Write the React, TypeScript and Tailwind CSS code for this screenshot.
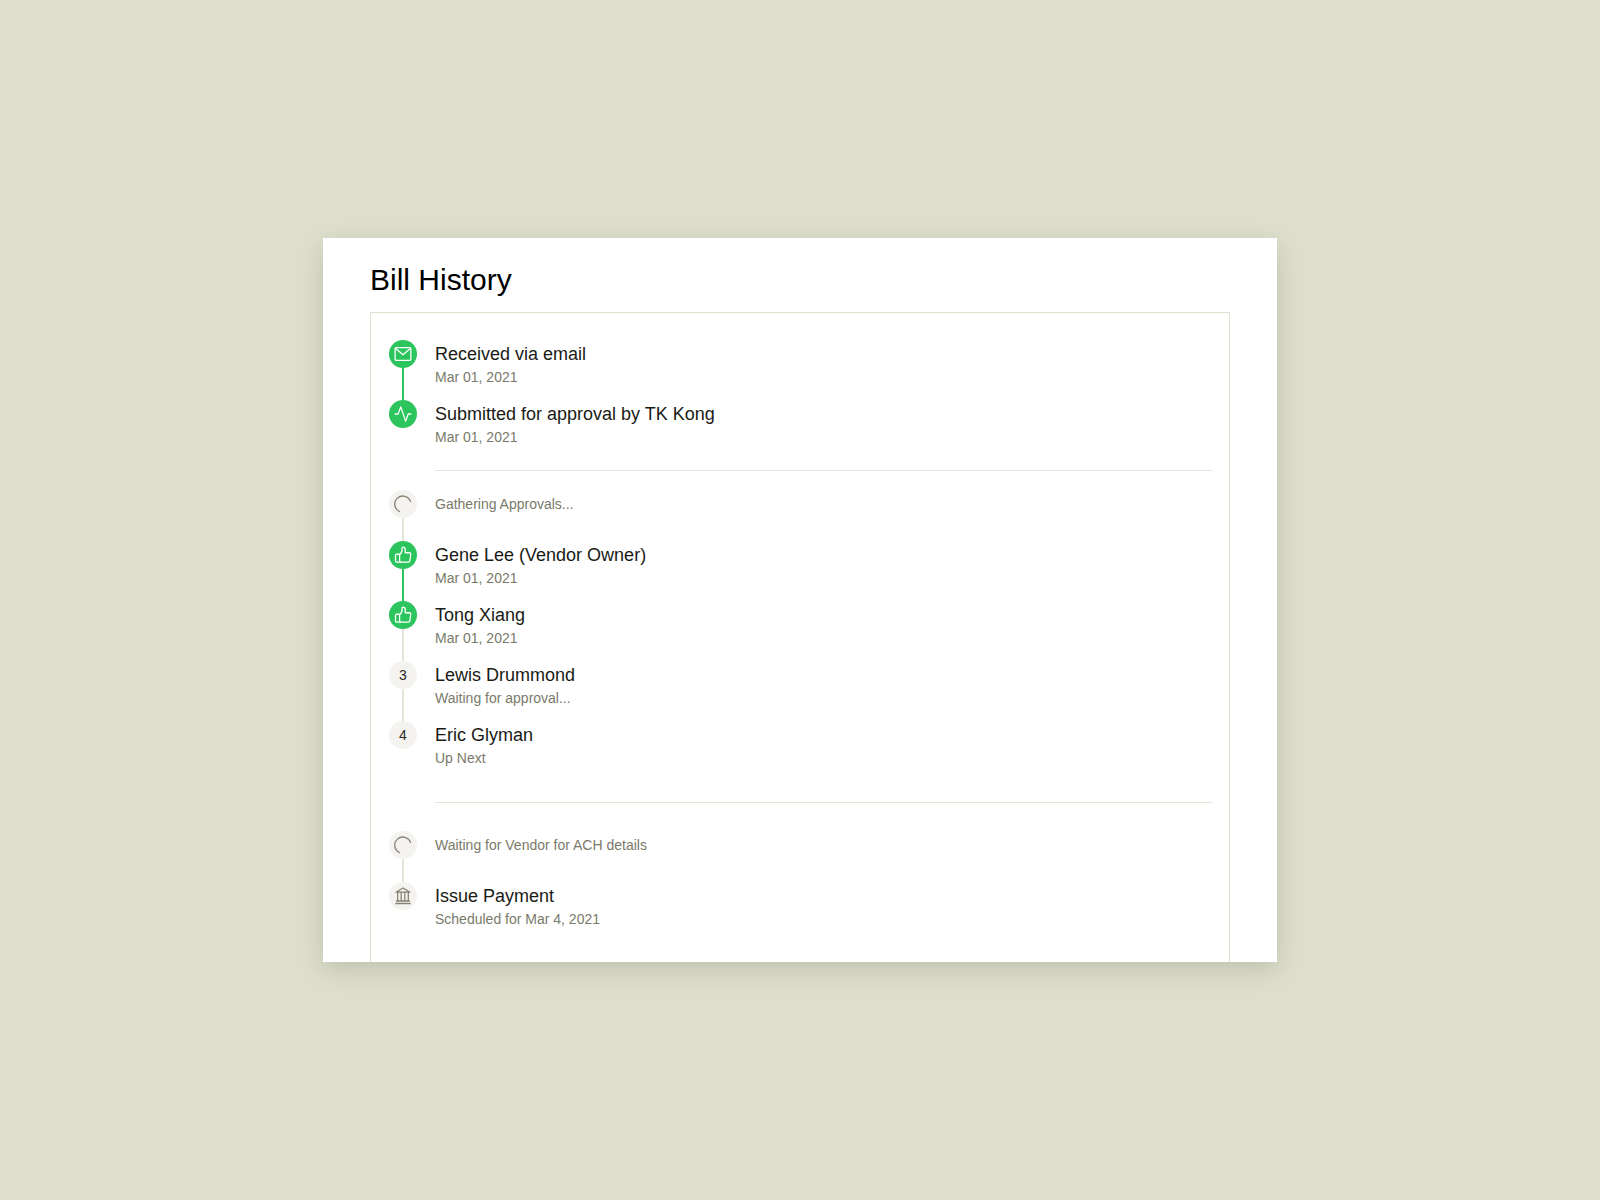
import type { ReactNode } from "react";

type Tone = "done" | "idle";

type Step = {
  icon: ReactNode;
  tone: Tone;
  title?: string;
  note: string;
};

const stroke = {
  fill: "none",
  stroke: "currentColor",
  strokeLinecap: "round",
  strokeLinejoin: "round",
} as const;

function MailIcon() {
  return (
    <svg viewBox="0 0 24 24" className="size-[18px]" strokeWidth="1.7" aria-hidden="true" {...stroke}>
      <rect x="1.5" y="3.5" width="21" height="17" rx="1.6" />
      <path d="M2.2 4.800 12 13l9.800-8.200" />
    </svg>
  );
}

function PulseIcon() {
  return (
    <svg viewBox="0 0 24 24" className="size-[18px]" strokeWidth="1.7" aria-hidden="true" {...stroke}>
      <path d="M22.5 12H19l-3.500 9.500L9 2.500 5.500 12h-4" />
    </svg>
  );
}

function ThumbIcon() {
  return (
    <svg viewBox="0 0 24 24" className="size-[18px]" strokeWidth="1.7" aria-hidden="true" {...stroke}>
      <path d="M7.500 11.500c2.200-1.200 3.200-3.500 3.200-6.500V3c0-.8.500-1.500 1.300-1.500 1.700 0 3 1.400 3 3.100V9h5.300a2 2 0 0 1 2 2.300l-1.200 8.500a2 2 0 0 1-2 1.700H9.500a2 2 0 0 1-2-2z" />
      <path d="M7.500 11H3.600A1.600 1.600 0 0 0 2 12.600v7.300a1.600 1.600 0 0 0 1.600 1.600h5.400" />
    </svg>
  );
}

function SpinnerIcon() {
  return (
    <svg viewBox="0 0 28 28" className="size-7" strokeWidth="1.3" aria-hidden="true" {...stroke}>
      <path d="M21.500 11.500A8.100 8.100 0 1 0 10.500 21.500" />
    </svg>
  );
}

function BankIcon() {
  return (
    <svg viewBox="0 0 28 28" className="size-7" strokeWidth="1.300" aria-hidden="true" {...stroke}>
      <path d="M7 10.200 14 6l7 4.200z" />
      <path d="M8.700 10.500v8.300M12.200 10.500v8.300M15.800 10.500v8.300M19.300 10.500v8.300M7.500 19h13M6.900 21.500h14.200" />
    </svg>
  );
}

const intake: Step[] = [
  { icon: <MailIcon />, tone: "done", title: "Received via email", note: "Mar 01, 2021" },
  { icon: <PulseIcon />, tone: "done", title: "Submitted for approval by TK Kong", note: "Mar 01, 2021" },
];

const approvals: Step[] = [
  { icon: <SpinnerIcon />, tone: "idle", note: "Gathering Approvals..." },
  { icon: <ThumbIcon />, tone: "done", title: "Gene Lee (Vendor Owner)", note: "Mar 01, 2021" },
  { icon: <ThumbIcon />, tone: "done", title: "Tong Xiang", note: "Mar 01, 2021" },
  { icon: <span className="text-sm text-[#2b2b25]">3</span>, tone: "idle", title: "Lewis Drummond", note: "Waiting for approval..." },
  { icon: <span className="text-sm text-[#2b2b25]">4</span>, tone: "idle", title: "Eric Glyman", note: "Up Next" },
];

const payment: Step[] = [
  { icon: <SpinnerIcon />, tone: "idle", note: "Waiting for Vendor for ACH details" },
  { icon: <BankIcon />, tone: "idle", title: "Issue Payment", note: "Scheduled for Mar 4, 2021" },
];

function Timeline({ steps }: { steps: Step[] }) {
  return (
    <ol>
      {steps.map((step, i) => {
        const next = steps[i + 1];
        const linked = next && step.tone === "done" && next.tone === "done";
        const gap = !next ? "" : step.title ? "pb-[13px]" : "pb-[23px]";
        return (
          <li key={i} className="flex gap-[18px]">
            <div className="flex flex-col items-center">
              <span
                className={
                  step.tone === "done"
                    ? "flex size-7 shrink-0 items-center justify-center rounded-full bg-[#2cc45c] text-white"
                    : "flex size-7 shrink-0 items-center justify-center rounded-full bg-[#f4f3f0] text-[#838375]"
                }
              >
                {step.icon}
              </span>
              {next && <span className={linked ? "w-0.5 grow bg-[#2cc45c]" : "w-0.5 grow bg-[#e4e4d9]"} />}
            </div>
            <div className={gap}>
              {step.title && <h2 className="text-lg leading-7 text-[#1a1a15]">{step.title}</h2>}
              <p className={step.title ? "text-sm leading-[19px] text-[#7a7a6a]" : "text-sm leading-7 text-[#7a7a6a]"}>
                {step.note}
              </p>
            </div>
          </li>
        );
      })}
    </ol>
  );
}

export default function App() {
  return (
    <div className="flex min-h-screen items-center justify-center bg-[#dddecb] font-['Liberation_Sans',Arial,sans-serif]">
      <main className="w-full max-w-[954px] bg-white px-[47px] pt-[22px] shadow-[0_8px_24px_rgba(0,0,0,0.13)]">
        <h1 className="text-3xl leading-10 text-black">Bill History</h1>
        <section className="mt-3 border border-b-0 border-[#dfe0d0] pr-[17px] pl-[18px] pt-[27px] pb-[33px]">
          <Timeline steps={intake} />
          <hr className="mt-[23px] mb-[19px] ml-[46px] border-[#e4e4dd]" />
          <Timeline steps={approvals} />
          <hr className="mt-[34px] mb-7 ml-[46px] border-[#e4e4d6]" />
          <Timeline steps={payment} />
        </section>
      </main>
    </div>
  );
}
